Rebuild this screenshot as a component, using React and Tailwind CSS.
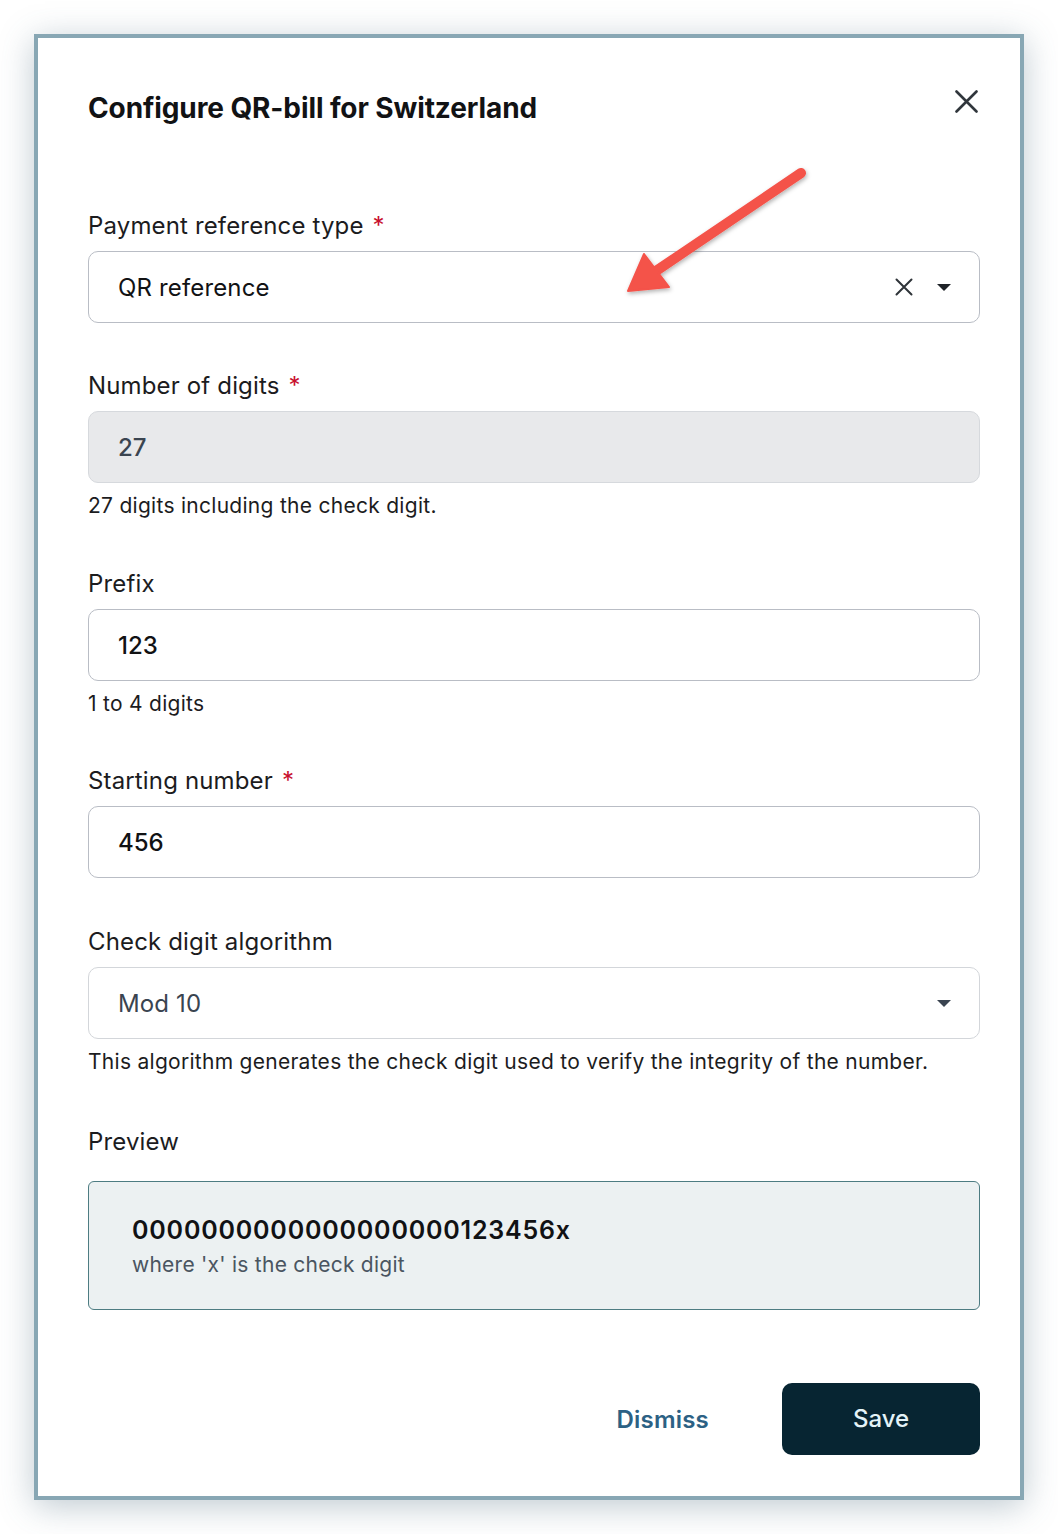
import React from "react";

function Label({ children, required }) {
  return (
    <div className="text-[24px] leading-[36px] text-[#1c1c1e] tracking-[0.15px] translate-y-[1px]">
      {children}
      {required && <span className="ml-[9px] text-[#c8102e]">*</span>}
    </div>
  );
}

function Caret({ color = "#1f2328" }) {
  return (
    <svg width="14" height="7" viewBox="0 0 14 7" className="block">
      <path d="M0 0 L14 0 L7 7 Z" fill={color} />
    </svg>
  );
}

export default function App() {
  return (
    <div className="relative w-[1058px] h-[1534px] bg-white p-[34px]" style={{ fontFamily: "Inter, 'Noto Sans', sans-serif" }}>
      <div className="relative w-[990px] h-[1466px] border-[4px] border-[#88a7b4] bg-white shadow-[0_6px_32px_rgba(70,100,120,0.35)] pl-[50px] pr-[40px] pt-[49px]">
        {/* Header */}
        <div className="flex items-center justify-between h-[40px]">
          <h1 className="text-[28px] leading-[40px] font-bold text-[#111214] tracking-[-0.1px] translate-y-[1px]">Configure QR-bill for Switzerland</h1>
          <button className="mr-[2px] -mt-[12px]">
            <svg width="23" height="23" viewBox="0 0 23 23" className="block">
              <path d="M1.5 1.5 L21.5 21.5 M21.5 1.5 L1.5 21.5" stroke="#30363c" strokeWidth="2.6" strokeLinecap="round" />
            </svg>
          </button>
        </div>

        {/* Payment reference type */}
        <div className="mt-[80px]">
          <Label required>Payment reference type</Label>
          <div className="mt-[8px] h-[72px] rounded-[10px] border border-[#b9bdc5] flex items-center pl-[29px] pr-[28px]">
            <span className="flex-1 text-[24px] text-[#111214] tracking-[0.15px] translate-y-[1px]">QR reference</span>
            <svg width="18" height="18" viewBox="0 0 18 18" className="block mr-[24px]">
              <path d="M1.5 1.5 L16.5 16.5 M16.5 1.5 L1.5 16.5" stroke="#2f3439" strokeWidth="2" strokeLinecap="round" />
            </svg>
            <Caret color="#1f2328" />
          </div>
        </div>

        {/* Number of digits */}
        <div className="mt-[44px]">
          <Label required>Number of digits</Label>
          <div className="mt-[8px] h-[72px] rounded-[10px] border border-[#d6d9dd] bg-[#e8e9eb] flex items-center pl-[29px]">
            <span className="text-[24px] font-medium text-[#3a4450] translate-y-[1px]">27</span>
          </div>
          <div className="mt-[8px] text-[21px] leading-[30px] text-[#1c1c1e] tracking-[0.28px]">27 digits including the check digit.</div>
        </div>

        {/* Prefix */}
        <div className="mt-[44px]">
          <Label>Prefix</Label>
          <div className="mt-[8px] h-[72px] rounded-[10px] border border-[#b9bdc5] flex items-center pl-[29px]">
            <span className="text-[24px] font-medium text-[#111214] translate-y-[1px]">123</span>
          </div>
          <div className="mt-[8px] text-[21px] leading-[30px] text-[#1c1c1e] tracking-[0.28px]">1 to 4 digits</div>
        </div>

        {/* Starting number */}
        <div className="mt-[43px]">
          <Label required>Starting number</Label>
          <div className="mt-[8px] h-[72px] rounded-[10px] border border-[#b9bdc5] flex items-center pl-[29px]">
            <span className="text-[24px] font-medium text-[#111214] translate-y-[1px]">456</span>
          </div>
        </div>

        {/* Check digit algorithm */}
        <div className="mt-[45px]">
          <Label>Check digit algorithm</Label>
          <div className="mt-[8px] h-[72px] rounded-[10px] border border-[#d3d6da] flex items-center pl-[29px] pr-[28px]">
            <span className="flex-1 text-[24px] text-[#3a4450] tracking-[0.15px] translate-y-[1px]">Mod 10</span>
            <Caret color="#3a4450" />
          </div>
          <div className="mt-[8px] text-[21px] leading-[30px] text-[#1c1c1e] tracking-[0.28px]">This algorithm generates the check digit used to verify the integrity of the number.</div>
        </div>

        {/* Preview */}
        <div className="mt-[46px]">
          <Label>Preview</Label>
          <div className="mt-[22px] h-[129px] rounded-[6px] border border-[#4d7c82] bg-[#ecf1f2] pl-[43px] pt-[31px]">
            <div className="text-[25px] leading-[34px] font-semibold text-[#111214] tracking-[0.8px]">0000000000000000000123456x</div>
            <div className="mt-[3px] text-[21px] leading-[30px] text-[#4a5561] tracking-[0.25px]">where 'x' is the check digit</div>
          </div>
        </div>

        {/* Footer */}
        <div className="mt-[73px] flex items-center justify-end gap-[73px]">
          <button className="text-[24px] font-semibold text-[#2c6184] tracking-[0.2px] translate-y-[1px]">Dismiss</button>
          <button className="w-[198px] h-[72px] rounded-[10px] bg-[#072532] text-[24px] font-medium text-[#e4f3f8]">Save</button>
        </div>
      </div>

      {/* Annotation arrow */}
      <svg className="absolute left-0 top-0 pointer-events-none" width="1058" height="1534" viewBox="0 0 1058 1534">
        <defs>
          <filter id="ash" x="-20%" y="-20%" width="140%" height="140%">
            <feDropShadow dx="1" dy="2" stdDeviation="2" floodColor="#000" floodOpacity="0.3" />
          </filter>
        </defs>
        <g filter="url(#ash)">
          <path d="M801 173 L656 271" stroke="#f4524a" strokeWidth="10" strokeLinecap="round" />
          <path d="M628 291 L644 254 L669 287 Z" fill="#f4524a" stroke="#f4524a" strokeWidth="2" strokeLinejoin="round" />
        </g>
      </svg>
    </div>
  );
}
